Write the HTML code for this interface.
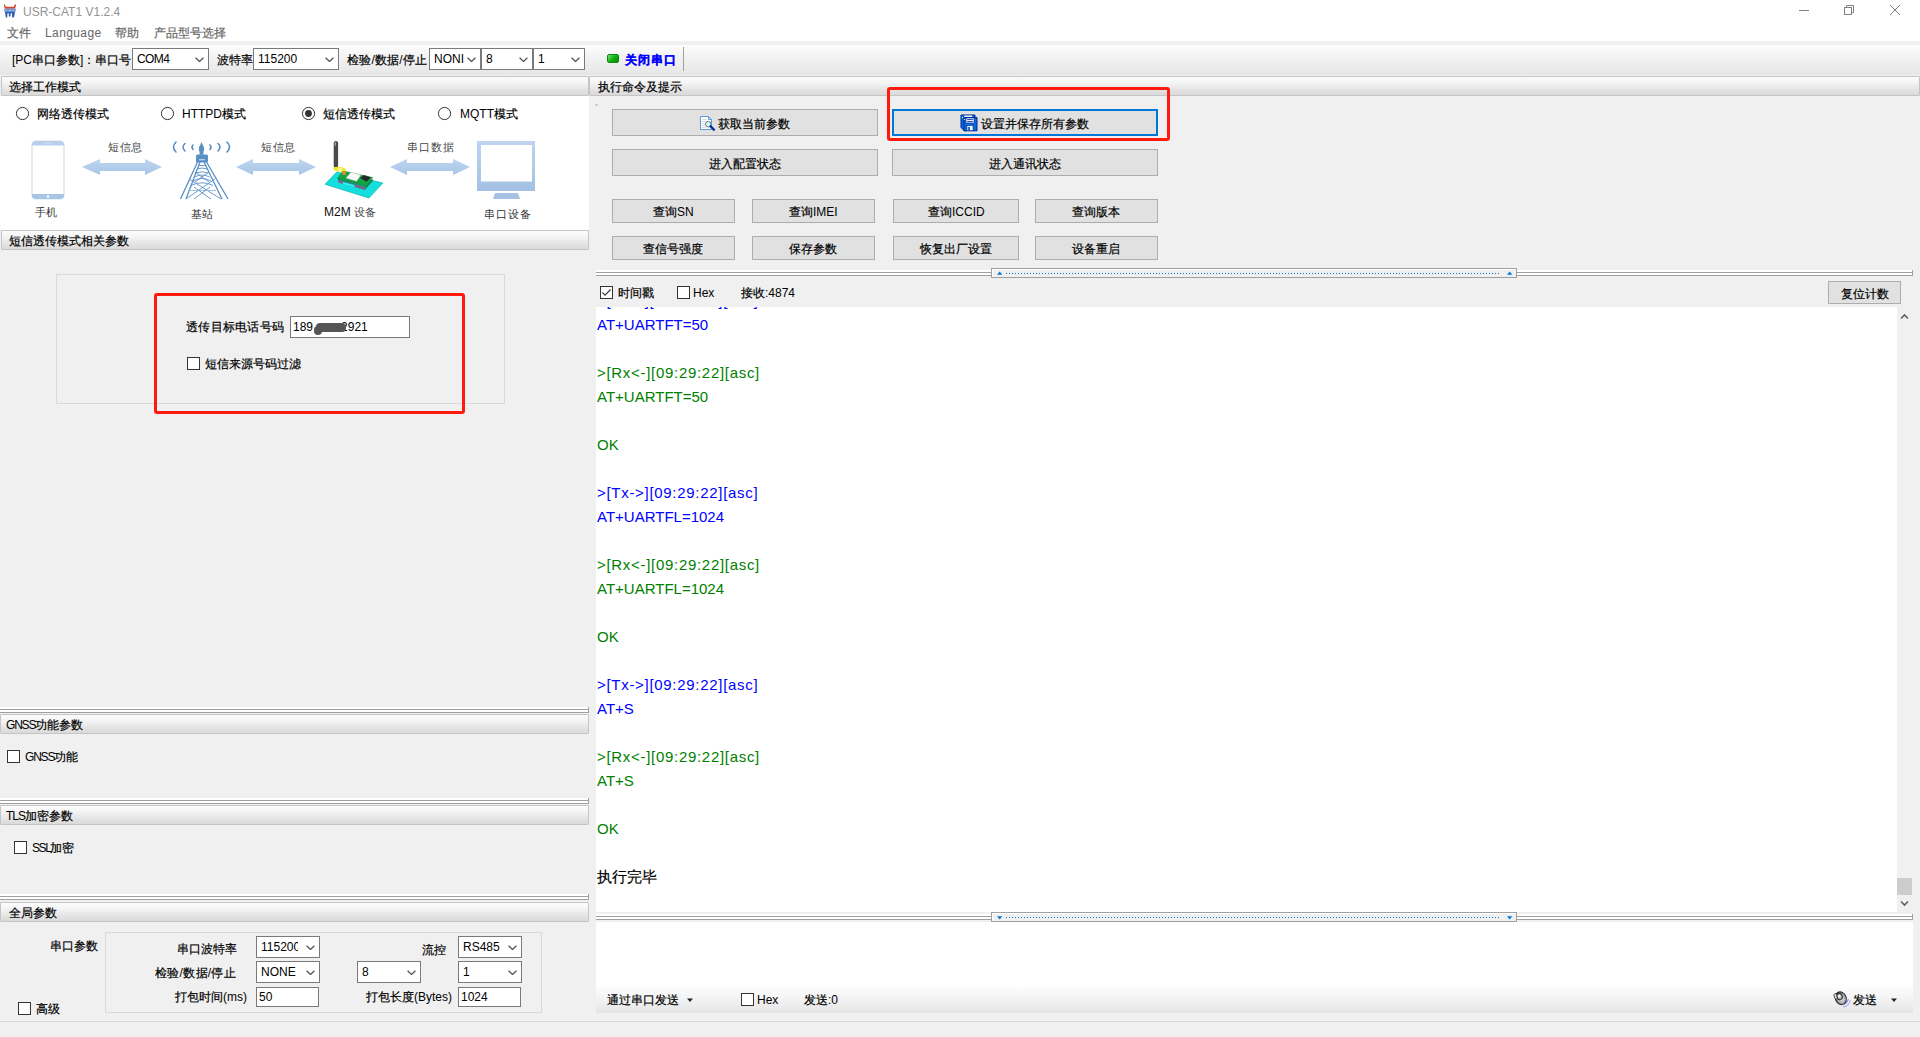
<!DOCTYPE html>
<html><head><meta charset="utf-8">
<style>
*{box-sizing:border-box}
html,body{margin:0;padding:0}
body{width:1920px;height:1037px;overflow:hidden;position:relative;background:#f0f0f0;font-family:"Liberation Sans",sans-serif;font-size:12px;line-height:14px;color:#000}
.a{position:absolute}
.t{position:absolute;white-space:nowrap}
.hdr{position:absolute;height:20px;border:1px solid #c5c5c5;border-radius:1px;background:linear-gradient(#fcfcfc,#f3f3f3 35%,#e2e2e2 75%,#dadada)}
.hdr>span{position:absolute;left:7px;top:3px;white-space:nowrap}
.btn{position:absolute;border:1px solid #adadad;background:#e1e1e1;text-align:center;white-space:nowrap}
.cb{position:absolute;width:13px;height:13px;border:1px solid #333;background:#fff}
.cmb{position:absolute;border:1px solid #7a7a7a;background:#fff;height:22px}
.cmb>span{position:absolute;left:4px;top:3px;white-space:nowrap}
.cmb svg{position:absolute;right:4px;top:8px}
.inp{position:absolute;border:1px solid #7a7a7a;background:#fff}
.spl{position:absolute;height:6px;background:linear-gradient(#fff 0,#fff 2px,#a0a0a0 2px,#a0a0a0 3px,#fff 3px,#fff 5px,#a0a0a0 5px,#a0a0a0 6px)}
.log{position:absolute;left:1px;font-size:15px;line-height:17px;white-space:nowrap}
.k{-webkit-text-stroke:var(--ks,0.2px) currentColor;display:inline-block;width:var(--kw,1em);text-align:center;font-weight:inherit}
.bl{color:#0000ff}.gr{color:#008000}
</style></head>
<body>
<!-- title bar + menu -->
<div class="a" style="left:0;top:0;width:1920px;height:41px;background:#fff"></div>
<svg class="a" style="left:0;top:0" width="20" height="20" viewBox="0 0 20 20">
<path d="M4 4.5 Q4.5 4 5 4.5 L5.8 6.8 L13.8 6.8 L14.8 4.5 Q15.5 4 16 4.5 L15.8 6.5 L14.8 8.8 L5 8.8 L4.2 6.5 Z" fill="#d6442c"/>
<rect x="4.2" y="8.6" width="11.6" height="3" fill="#6a93d2"/>
<path d="M5 10.3 H7 M8.5 10.3 H11.5 M13 10.3 H15" stroke="#b8cbe8" stroke-width="0.8"/>
<path d="M5 11.5 H15 L14.6 14.5 L13.9 17.5 L12.2 17.5 L12 13.5 Q11.3 12.5 10.7 13.5 L10.4 16.5 L8.9 16.5 L8.7 13.5 Q8 12.5 7.4 13.5 L7.3 17.5 L5.9 17.5 L5.3 14.5 Z" fill="#2a5fb0"/>
</svg>
<div class="t" style="left:23px;top:5px;color:#939393">USR-CAT1 V1.2.4</div>
<div class="t" style="left:7px;top:26px;color:#666"><b class="k">文</b><b class="k">件</b></div>
<div class="t" style="left:45px;top:26px;color:#666;letter-spacing:0.4px">Language</div>
<div class="t" style="left:115px;top:26px;color:#666"><b class="k">帮</b><b class="k">助</b></div>
<div class="t" style="left:154px;top:26px;color:#666"><b class="k">产</b><b class="k">品</b><b class="k">型</b><b class="k">号</b><b class="k">选</b><b class="k">择</b></div>
<svg class="a" style="left:1795px;top:0" width="110" height="22">
<line x1="4" y1="10.5" x2="14" y2="10.5" stroke="#808080" stroke-width="1"/>
<rect x="49.5" y="7.5" width="7" height="7" fill="none" stroke="#808080"/>
<path d="M51.5 7.5 V5.5 H58.5 V12.5 H56.5" fill="none" stroke="#808080"/>
<path d="M95 5 L105 15 M105 5 L95 15" stroke="#808080" stroke-width="1"/>
</svg>

<!-- toolbar -->
<div class="a" style="left:0;top:45px;width:1920px;height:30px;background:linear-gradient(#fdfdfd,#f3f3f3 40%,#e6e6e6)"></div>
<div class="t" style="left:12px;top:53px">[PC<b class="k">串</b><b class="k">口</b><b class="k">参</b><b class="k">数</b>]<b class="k">：</b><b class="k">串</b><b class="k">口</b><b class="k">号</b></div>
<div class="cmb" style="left:132px;top:48px;width:77px"><span style="letter-spacing:-0.6px">COM4</span><svg width="9" height="5"><path d="M0.6 0.8 L4.5 4.5 L8.4 0.8" fill="none" stroke="#505050" stroke-width="1.25"/></svg></div>
<div class="t" style="left:217px;top:53px"><b class="k">波</b><b class="k">特</b><b class="k">率</b></div>
<div class="cmb" style="left:253px;top:48px;width:86px"><span>115200</span><svg width="9" height="5"><path d="M0.6 0.8 L4.5 4.5 L8.4 0.8" fill="none" stroke="#505050" stroke-width="1.25"/></svg></div>
<div class="t" style="left:347px;top:53px;letter-spacing:0.2px;--kw:12.2px"><b class="k">检</b><b class="k">验</b>/<b class="k">数</b><b class="k">据</b>/<b class="k">停</b><b class="k">止</b></div>
<div class="cmb" style="left:429px;top:48px;width:52px"><span>NONI</span><svg width="9" height="5"><path d="M0.6 0.8 L4.5 4.5 L8.4 0.8" fill="none" stroke="#505050" stroke-width="1.25"/></svg></div>
<div class="cmb" style="left:481px;top:48px;width:52px"><span>8</span><svg width="9" height="5"><path d="M0.6 0.8 L4.5 4.5 L8.4 0.8" fill="none" stroke="#505050" stroke-width="1.25"/></svg></div>
<div class="cmb" style="left:533px;top:48px;width:52px"><span>1</span><svg width="9" height="5"><path d="M0.6 0.8 L4.5 4.5 L8.4 0.8" fill="none" stroke="#505050" stroke-width="1.25"/></svg></div>
<div class="a" style="left:607px;top:54px;width:12px;height:9px;border-radius:2px;background:linear-gradient(135deg,#7fe07f,#10b010 50%,#088a08);border:1px solid #0a8a0a"></div>
<div class="t" style="left:625px;top:53px;color:#0000ff;font-weight:bold;letter-spacing:1px;--kw:13px"><b class="k">关</b><b class="k">闭</b><b class="k">串</b><b class="k">口</b></div>
<div class="a" style="left:683px;top:47px;width:1px;height:24px;background:#a0a0a0"></div>

<!-- LEFT PANEL -->
<div class="hdr" style="left:1px;top:76px;width:588px"><span><b class="k">选</b><b class="k">择</b><b class="k">工</b><b class="k">作</b><b class="k">模</b><b class="k">式</b></span></div>
<div class="a" style="left:0;top:96px;width:589px;height:134px;background:#fff"></div>
<!-- radios -->
<svg class="a" style="left:15px;top:106px" width="16" height="16"><circle cx="7.5" cy="7.5" r="6.1" fill="#fff" stroke="#333" stroke-width="1"/></svg>
<div class="t" style="left:37px;top:107px"><b class="k">网</b><b class="k">络</b><b class="k">透</b><b class="k">传</b><b class="k">模</b><b class="k">式</b></div>
<svg class="a" style="left:160px;top:106px" width="16" height="16"><circle cx="7.5" cy="7.5" r="6.1" fill="#fff" stroke="#333" stroke-width="1"/></svg>
<div class="t" style="left:182px;top:107px">HTTPD<b class="k">模</b><b class="k">式</b></div>
<svg class="a" style="left:301px;top:106px" width="16" height="16"><circle cx="7.5" cy="7.5" r="6.1" fill="#fff" stroke="#333" stroke-width="1"/><circle cx="7.5" cy="7.5" r="3.4" fill="#333"/></svg>
<div class="t" style="left:323px;top:107px"><b class="k">短</b><b class="k">信</b><b class="k">透</b><b class="k">传</b><b class="k">模</b><b class="k">式</b></div>
<svg class="a" style="left:437px;top:106px" width="16" height="16"><circle cx="7.5" cy="7.5" r="6.1" fill="#fff" stroke="#333" stroke-width="1"/></svg>
<div class="t" style="left:460px;top:107px">MQTT<b class="k">模</b><b class="k">式</b></div>
<!-- diagram -->
<svg class="a" style="left:0;top:130px" width="589" height="100" viewBox="0 130 589 100">
<defs>
<linearGradient id="ag" x1="0" y1="0" x2="0" y2="1"><stop offset="0" stop-color="#bcd4ee"/><stop offset="1" stop-color="#a9c6e8"/></linearGradient>
<linearGradient id="mg" x1="0" y1="0" x2="0" y2="1"><stop offset="0" stop-color="#bdd5ef"/><stop offset="1" stop-color="#a3c1e3"/></linearGradient>
</defs>
<!-- phone -->
<rect x="32" y="141" width="32" height="58" rx="4" fill="#fff" stroke="#cfe0f4" stroke-width="1.2"/>
<path d="M32 145 Q32 141 36 141 L60 141 Q64 141 64 145 L64 145.5 L32 145.5 Z" fill="#b7cfec"/>
<path d="M32 194 L64 194 L64 195 Q64 199 60 199 L36 199 Q32 199 32 195 Z" fill="#a8c4e6"/>
<circle cx="48" cy="196.5" r="1.3" fill="#fff"/>
<rect x="45" y="142.5" width="6" height="1" fill="#d6e4f5"/>
<!-- arrows -->
<path d="M82 167 L100 159 L100 163 L145 163 L145 159 L162 167 L145 175 L145 171 L100 171 L100 175 Z" fill="url(#ag)"/>
<path d="M236 167 L253 159 L253 163 L299 163 L299 159 L316 167 L299 175 L299 171 L253 171 L253 175 Z" fill="url(#ag)"/>
<path d="M390 167 L407 159 L407 163 L453 163 L453 159 L470 167 L453 175 L453 171 L407 171 L407 175 Z" fill="url(#ag)"/>
<!-- tower -->
<g fill="none" stroke="#5a8fc5" stroke-width="1.6" stroke-linecap="round">
<path d="M176 142 Q171 147 176 152"/><path d="M185 143.5 Q181 147 185 151"/><path d="M193 145 Q191 147 193 149.5"/>
<path d="M210 145 Q212 147 210 149.5"/><path d="M218 143.5 Q222 147 218 151"/><path d="M227 142 Q232 147 227 152"/>
</g>
<g fill="#5a8fc5">
<path d="M201.5 142 L202.8 145 Q205 148 203.6 151.5 L203.3 154.8 L199.7 154.8 L199.4 151.5 Q198 148 200.2 145 Z"/>
<rect x="196" y="154.5" width="12" height="8" rx="1.5"/>
</g>
<rect x="199" y="159" width="6" height="1.3" fill="#b5cfe9"/>
<g stroke="#5a8fc5" stroke-width="1.3" fill="none">
<path d="M197.5 162 L180.5 199"/><path d="M200 162 L186 199"/>
<path d="M206.5 162 L228 199"/><path d="M204 162 L222 199"/>
</g>
<g stroke="#5a8fc5" stroke-width="0.9" fill="none">
<path d="M198 165.5 L206 165.5"/><path d="M197 169 Q202 167 207 169"/><path d="M196 173 Q202 170.5 208 173"/>
<path d="M194.5 177 Q202 173 209.5 177"/><path d="M193 181 Q202 176 211 181"/><path d="M191 185.5 Q202 180 213 185.5"/>
<path d="M195 172 L209 182 M209 172 L195 182"/>
<path d="M186 199 L215 179"/><path d="M221 199 L189 179"/>
<path d="M188 190.5 L216 190.5" stroke="#9dbde0"/>
<path d="M194 199 L210 187"/><path d="M211 199 L194 187"/>
</g>
<!-- M2M device -->
<path d="M325 184.3 L336.8 172 L382.8 183 L368.9 198 Z" fill="#14dede" stroke="#0cb4b4" stroke-width="0.7"/>
<path d="M338 178.5 L365.5 186.5 L365.5 190 L338 182 Z" fill="#3a3a50" opacity="0.55"/>
<path d="M338 180 L343 181.5 L343 184 L338 182.5 Z" fill="#7a6a80"/>
<path d="M354.7 184.5 L365.2 187.5 L365.2 190 L354.7 187 Z" fill="#7a6a80"/>
<path d="M343 182 L354.5 185 L354.5 187 L343 184 Z" fill="#30f0f0"/>
<path d="M365.5 186.5 L372.6 178.5 L372.6 181 L365.5 189 Z" fill="#0c7a30"/>
<path d="M337.4 178.4 L343 171 L372.6 177.5 L365.3 186 Z" fill="#12a442" stroke="#0a7a2a" stroke-width="0.5"/>
<path d="M346 178.1 L351 172.3 L360.9 175 L356.6 181.2 Z" fill="#f8f8f8" stroke="#c8c8c8" stroke-width="0.4"/>
<path d="M360.3 178 L364 175 L370.8 177.5 L366.4 181.8 Z" fill="#282828"/>
<rect x="333.7" y="141" width="4.4" height="27" rx="2.2" fill="#4a4a4a"/>
<rect x="334.5" y="142" width="1.5" height="4" rx="0.7" fill="#9a9a9a"/>
<path d="M333.5 167 L341 167 L345.8 169 L345.8 171.6 L338 171.6 L333.5 170 Z" fill="#f2e428"/>
<ellipse cx="340" cy="169.3" rx="2.3" ry="1.6" fill="#fff8a0"/>
<rect x="342.4" y="171" width="3.4" height="4" fill="#d89028"/>
<!-- monitor -->
<rect x="477" y="141" width="58" height="50" fill="url(#mg)"/>
<rect x="481" y="145" width="51" height="36.5" fill="#fff"/>
<path d="M495 193 L518 193 L520 199 L493 199 Z" fill="#a5c2e4"/>
</svg>
<div class="t" style="left:108px;top:140px;font-size:11px;color:#444;font-family:'Liberation Sans',sans-serif;--ks:0px;letter-spacing:0.5px;--kw:11.5px"><b class="k">短</b><b class="k">信</b><b class="k">息</b></div>
<div class="t" style="left:261px;top:140px;font-size:11px;color:#444;font-family:'Liberation Sans',sans-serif;--ks:0px;letter-spacing:0.5px;--kw:11.5px"><b class="k">短</b><b class="k">信</b><b class="k">息</b></div>
<div class="t" style="left:407px;top:140px;font-size:11px;color:#444;font-family:'Liberation Sans',sans-serif;--ks:0px;letter-spacing:1px;--kw:12px"><b class="k">串</b><b class="k">口</b><b class="k">数</b><b class="k">据</b></div>
<div class="t" style="left:35px;top:205px;font-size:11px;color:#333;font-family:'Liberation Sans',sans-serif;--ks:0px"><b class="k">手</b><b class="k">机</b></div>
<div class="t" style="left:191px;top:207px;font-size:11px;color:#333;font-family:'Liberation Sans',sans-serif;--ks:0px"><b class="k">基</b><b class="k">站</b></div>
<div class="t" style="left:324px;top:205px;font-size:12px;color:#111">M2M <span style="font-family:'Liberation Sans',sans-serif;--ks:0px;font-size:11px;color:#444"><b class="k">设</b><b class="k">备</b></span></div>
<div class="t" style="left:484px;top:207px;font-size:11px;color:#333;font-family:'Liberation Sans',sans-serif;--ks:0px;letter-spacing:1px;--kw:12px"><b class="k">串</b><b class="k">口</b><b class="k">设</b><b class="k">备</b></div>

<div class="hdr" style="left:1px;top:230px;width:588px"><span><b class="k">短</b><b class="k">信</b><b class="k">透</b><b class="k">传</b><b class="k">模</b><b class="k">式</b><b class="k">相</b><b class="k">关</b><b class="k">参</b><b class="k">数</b></span></div>
<!-- group box -->
<div class="a" style="left:56px;top:274px;width:449px;height:130px;border:1px solid #d9d9d9"></div>
<div class="t" style="left:186px;top:320px;letter-spacing:0.3px;--kw:12.3px"><b class="k">透</b><b class="k">传</b><b class="k">目</b><b class="k">标</b><b class="k">电</b><b class="k">话</b><b class="k">号</b><b class="k">码</b></div>
<div class="inp" style="left:290px;top:316px;width:120px;height:22px"></div>
<div class="t" style="left:293px;top:320px">189<span style="display:inline-block;width:28px"></span>2921</div>
<div class="a" style="left:316px;top:323px;width:30px;height:9px;border-radius:4px;background:#555"></div>
<div class="a" style="left:314px;top:326px;width:8px;height:9px;border-radius:4px;background:#555"></div>
<div class="cb" style="left:187px;top:357px"></div>
<div class="t" style="left:205px;top:357px"><b class="k">短</b><b class="k">信</b><b class="k">来</b><b class="k">源</b><b class="k">号</b><b class="k">码</b><b class="k">过</b><b class="k">滤</b></div>
<div class="a" style="left:154px;top:293px;width:311px;height:121px;border:3px solid #ff1a0d;border-radius:3px"></div>

<!-- GNSS -->
<div class="spl" style="left:0;top:707px;width:589px"></div>
<div class="a" style="left:588px;top:707px;width:1px;height:6px;background:#a0a0a0"></div>
<div class="hdr" style="left:0;top:714px;width:589px"><span style="left:5px"><span style="letter-spacing:-1.2px">GNSS</span><b class="k">功</b><b class="k">能</b><b class="k">参</b><b class="k">数</b></span></div>
<div class="cb" style="left:7px;top:750px"></div>
<div class="t" style="left:25px;top:750px"><span style="letter-spacing:-1.2px">GNSS</span><b class="k">功</b><b class="k">能</b></div>
<!-- TLS -->
<div class="spl" style="left:0;top:798px;width:589px"></div>
<div class="a" style="left:588px;top:798px;width:1px;height:6px;background:#a0a0a0"></div>
<div class="hdr" style="left:0;top:805px;width:589px"><span style="left:5px"><span style="letter-spacing:-1px">TLS</span><b class="k">加</b><b class="k">密</b><b class="k">参</b><b class="k">数</b></span></div>
<div class="cb" style="left:14px;top:841px"></div>
<div class="t" style="left:32px;top:841px"><span style="letter-spacing:-1.4px">SSL</span><b class="k">加</b><b class="k">密</b></div>
<!-- Global -->
<div class="spl" style="left:0;top:894px;width:589px"></div>
<div class="a" style="left:588px;top:894px;width:1px;height:6px;background:#a0a0a0"></div>
<div class="hdr" style="left:0;top:902px;width:589px"><span style="left:8px"><b class="k">全</b><b class="k">局</b><b class="k">参</b><b class="k">数</b></span></div>
<div class="t" style="left:50px;top:939px"><b class="k">串</b><b class="k">口</b><b class="k">参</b><b class="k">数</b></div>
<div class="a" style="left:105px;top:932px;width:437px;height:81px;border:1px solid #d9d9d9"></div>
<div class="t" style="left:177px;top:942px"><b class="k">串</b><b class="k">口</b><b class="k">波</b><b class="k">特</b><b class="k">率</b></div>
<div class="cmb" style="left:256px;top:936px;width:64px"><span style="width:37px;overflow:hidden;display:block;height:14px">115200</span><svg width="9" height="5"><path d="M0.6 0.8 L4.5 4.5 L8.4 0.8" fill="none" stroke="#505050" stroke-width="1.25"/></svg></div>
<div class="t" style="left:422px;top:943px"><b class="k">流</b><b class="k">控</b></div>
<div class="cmb" style="left:458px;top:936px;width:64px"><span>RS485</span><svg width="9" height="5"><path d="M0.6 0.8 L4.5 4.5 L8.4 0.8" fill="none" stroke="#505050" stroke-width="1.25"/></svg></div>
<div class="t" style="left:155px;top:966px;letter-spacing:0.3px;--kw:12.3px"><b class="k">检</b><b class="k">验</b>/<b class="k">数</b><b class="k">据</b>/<b class="k">停</b><b class="k">止</b></div>
<div class="cmb" style="left:256px;top:961px;width:64px"><span>NONE</span><svg width="9" height="5"><path d="M0.6 0.8 L4.5 4.5 L8.4 0.8" fill="none" stroke="#505050" stroke-width="1.25"/></svg></div>
<div class="cmb" style="left:357px;top:961px;width:64px"><span>8</span><svg width="9" height="5"><path d="M0.6 0.8 L4.5 4.5 L8.4 0.8" fill="none" stroke="#505050" stroke-width="1.25"/></svg></div>
<div class="cmb" style="left:458px;top:961px;width:64px"><span>1</span><svg width="9" height="5"><path d="M0.6 0.8 L4.5 4.5 L8.4 0.8" fill="none" stroke="#505050" stroke-width="1.25"/></svg></div>
<div class="t" style="left:175px;top:990px"><b class="k">打</b><b class="k">包</b><b class="k">时</b><b class="k">间</b>(ms)</div>
<div class="inp" style="left:256px;top:987px;width:63px;height:20px"><span class="t" style="left:2px;top:2px">50</span></div>
<div class="t" style="left:366px;top:990px"><b class="k">打</b><b class="k">包</b><b class="k">长</b><b class="k">度</b>(Bytes)</div>
<div class="inp" style="left:458px;top:987px;width:63px;height:20px"><span class="t" style="left:2px;top:2px">1024</span></div>
<div class="cb" style="left:18px;top:1002px"></div>
<div class="t" style="left:36px;top:1002px"><b class="k">高</b><b class="k">级</b></div>
<!-- status line -->
<div class="a" style="left:0;top:1021px;width:1920px;height:1px;background:#d8d8d8"></div>

<!-- RIGHT PANEL -->
<div class="hdr" style="left:589px;top:76px;width:1331px"><span style="left:8px"><b class="k">执</b><b class="k">行</b><b class="k">命</b><b class="k">令</b><b class="k">及</b><b class="k">提</b><b class="k">示</b></span></div>
<div class="a" style="left:595px;top:104px;width:3px;height:2px;background:#c8c8c8;border-radius:1px"></div>
<!-- buttons -->
<div class="btn" style="left:612px;top:109px;width:266px;height:27px"></div>
<svg class="a" style="left:696px;top:112px" width="24" height="22" viewBox="696 112 24 22">
<path d="M700.5 116.5 H708.5 L711.5 119.5 V129.5 H700.5 Z" fill="#fff" stroke="#5b9ad6" stroke-width="1"/>
<path d="M708.5 116.5 V119.5 H711.5" fill="none" stroke="#5b9ad6" stroke-width="1"/>
<path d="M702 119.5 H706.5 M702 121.5 H706 M702 123.5 H705 M702 125.5 H705 M702 127.5 H706" stroke="#d4d4d4" stroke-width="0.8"/>
<circle cx="708.3" cy="124.2" r="2.8" fill="#cffafa" stroke="#787878" stroke-width="1"/>
<path d="M710.6 126.4 L713.8 129.6" stroke="#0a2aa0" stroke-width="2.2" stroke-linecap="square"/>
</svg>
<div class="t" style="left:718px;top:117px"><b class="k">获</b><b class="k">取</b><b class="k">当</b><b class="k">前</b><b class="k">参</b><b class="k">数</b></div>
<div class="btn" style="left:892px;top:109px;width:266px;height:27px;border:2px solid #0078d7"></div>
<svg class="a" style="left:956px;top:112px" width="24" height="22" viewBox="956 112 24 22">
<path d="M961 115 H975 V128 L964.5 131 L961 127.5 Z" fill="#0068d8" stroke="#002898" stroke-width="1"/>
<rect x="964.2" y="115.6" width="8" height="1.4" rx="0.6" fill="#fff"/>
<circle cx="962.5" cy="117.5" r="0.7" fill="#fff"/>
<path d="M964 117.5 H977 V130.8 H964 Z" fill="#0a6ad8" stroke="#002898" stroke-width="1"/>
<rect x="966" y="118" width="8" height="5" fill="#fff" stroke="#002898" stroke-width="0.6"/>
<path d="M967.2 119.6 H972.8 M967.2 121.6 H972.8" stroke="#002898" stroke-width="0.9"/>
<rect x="967" y="125.5" width="6" height="5" fill="#fff" stroke="#002898" stroke-width="0.6"/>
<rect x="968.2" y="127" width="1.8" height="3.5" fill="#0a5ac8"/>
<circle cx="964.5" cy="119.5" r="0.6" fill="#fff"/>
</svg>
<div class="t" style="left:981px;top:117px"><b class="k">设</b><b class="k">置</b><b class="k">并</b><b class="k">保</b><b class="k">存</b><b class="k">所</b><b class="k">有</b><b class="k">参</b><b class="k">数</b></div>
<div class="btn" style="left:612px;top:149px;width:266px;height:27px"></div>
<div class="t" style="left:709px;top:157px"><b class="k">进</b><b class="k">入</b><b class="k">配</b><b class="k">置</b><b class="k">状</b><b class="k">态</b></div>
<div class="btn" style="left:892px;top:149px;width:266px;height:27px"></div>
<div class="t" style="left:989px;top:157px"><b class="k">进</b><b class="k">入</b><b class="k">通</b><b class="k">讯</b><b class="k">状</b><b class="k">态</b></div>

<div class="btn" style="left:612px;top:199px;width:123px;height:24px"></div><div class="t" style="left:653px;top:205px"><b class="k">查</b><b class="k">询</b>SN</div>
<div class="btn" style="left:752px;top:199px;width:123px;height:24px"></div><div class="t" style="left:789px;top:205px"><b class="k">查</b><b class="k">询</b>IMEI</div>
<div class="btn" style="left:893px;top:199px;width:126px;height:24px"></div><div class="t" style="left:928px;top:205px"><b class="k">查</b><b class="k">询</b>ICCID</div>
<div class="btn" style="left:1035px;top:199px;width:123px;height:24px"></div><div class="t" style="left:1072px;top:205px"><b class="k">查</b><b class="k">询</b><b class="k">版</b><b class="k">本</b></div>
<div class="btn" style="left:612px;top:236px;width:123px;height:24px"></div><div class="t" style="left:643px;top:242px"><b class="k">查</b><b class="k">信</b><b class="k">号</b><b class="k">强</b><b class="k">度</b></div>
<div class="btn" style="left:752px;top:236px;width:123px;height:24px"></div><div class="t" style="left:789px;top:242px"><b class="k">保</b><b class="k">存</b><b class="k">参</b><b class="k">数</b></div>
<div class="btn" style="left:893px;top:236px;width:126px;height:24px"></div><div class="t" style="left:920px;top:242px"><b class="k">恢</b><b class="k">复</b><b class="k">出</b><b class="k">厂</b><b class="k">设</b><b class="k">置</b></div>
<div class="btn" style="left:1035px;top:236px;width:123px;height:24px"></div><div class="t" style="left:1072px;top:242px"><b class="k">设</b><b class="k">备</b><b class="k">重</b><b class="k">启</b></div>
<div class="a" style="left:887px;top:87px;width:283px;height:54px;border:3px solid #ff1a0d;border-radius:3px"></div>

<!-- splitter top -->
<div class="spl" style="left:596px;top:270px;width:1317px"></div>
<div class="a" style="left:1912px;top:270px;width:1px;height:6px;background:#a0a0a0"></div>
<div class="a" style="left:991px;top:268px;width:526px;height:10px;border:1px solid #a0a0a0;background:#f0f0f0;box-shadow:inset 1px 1px 0 #fff"></div>
<svg class="a" style="left:997px;top:271px" width="6" height="4"><path d="M0 3.8 L2.7 0.6 L5.4 3.8 Z" fill="#0078d7"/></svg>
<div class="a" style="left:1006px;top:273px;width:494px;height:1px;background:repeating-linear-gradient(90deg,#0078d7 0,#0078d7 1px,transparent 1px,transparent 3px)"></div>
<svg class="a" style="left:1507px;top:271px" width="6" height="4"><path d="M0 3.8 L2.7 0.6 L5.4 3.8 Z" fill="#0078d7"/></svg>

<!-- receive toolbar -->
<div class="cb" style="left:600px;top:286px"></div>
<svg class="a" style="left:600px;top:286px" width="13" height="13"><path d="M2.3 6.3 L5 9.2 L10.6 3.5" fill="none" stroke="#333" stroke-width="1.1"/></svg>
<div class="t" style="left:618px;top:286px"><b class="k">时</b><b class="k">间</b><b class="k">戳</b></div>
<div class="cb" style="left:677px;top:286px"></div>
<div class="t" style="left:693px;top:286px">Hex</div>
<div class="t" style="left:741px;top:286px"><b class="k">接</b><b class="k">收</b>:4874</div>
<div class="btn" style="left:1828px;top:281px;width:73px;height:23px"></div>
<div class="t" style="left:1841px;top:287px"><b class="k">复</b><b class="k">位</b><b class="k">计</b><b class="k">数</b></div>

<!-- log area -->
<div class="a" style="left:596px;top:307px;width:1301px;height:605px;background:#fff;overflow:hidden">
<div class="log bl" style="top:-15px;letter-spacing:0.7px">&gt;[Tx-&gt;][09:29:22][asc]</div>
<div class="log bl" style="top:9px">AT+UARTFT=50</div>
<div class="log gr" style="top:57px;letter-spacing:0.7px">&gt;[Rx&lt;-][09:29:22][asc]</div>
<div class="log gr" style="top:81px">AT+UARTFT=50</div>
<div class="log gr" style="top:129px">OK</div>
<div class="log bl" style="top:177px;letter-spacing:0.7px">&gt;[Tx-&gt;][09:29:22][asc]</div>
<div class="log bl" style="top:201px">AT+UARTFL=1024</div>
<div class="log gr" style="top:249px;letter-spacing:0.7px">&gt;[Rx&lt;-][09:29:22][asc]</div>
<div class="log gr" style="top:273px">AT+UARTFL=1024</div>
<div class="log gr" style="top:321px">OK</div>
<div class="log bl" style="top:369px;letter-spacing:0.7px">&gt;[Tx-&gt;][09:29:22][asc]</div>
<div class="log bl" style="top:393px">AT+S</div>
<div class="log gr" style="top:441px;letter-spacing:0.7px">&gt;[Rx&lt;-][09:29:22][asc]</div>
<div class="log gr" style="top:465px">AT+S</div>
<div class="log gr" style="top:513px">OK</div>
<div class="log" style="top:561px"><b class="k">执</b><b class="k">行</b><b class="k">完</b><b class="k">毕</b></div>
</div>
<!-- cover toolbar overlap -->
<!-- scrollbar -->
<svg class="a" style="left:1900px;top:312px" width="9" height="8"><path d="M1 6.5 L4.5 3 L8 6.5" fill="none" stroke="#606060" stroke-width="1.6"/></svg>
<div class="a" style="left:1897px;top:878px;width:15px;height:17px;background:#cdcdcd"></div>
<svg class="a" style="left:1900px;top:900px" width="9" height="8"><path d="M1 1.5 L4.5 5 L8 1.5" fill="none" stroke="#606060" stroke-width="1.6"/></svg>

<!-- splitter bottom -->
<div class="spl" style="left:596px;top:914px;width:1317px"></div>
<div class="a" style="left:1912px;top:914px;width:1px;height:6px;background:#a0a0a0"></div>
<div class="a" style="left:991px;top:912px;width:526px;height:10px;border:1px solid #a0a0a0;background:#f0f0f0;box-shadow:inset 1px 1px 0 #fff"></div>
<svg class="a" style="left:997px;top:916px" width="6" height="4"><path d="M0 0.2 L2.7 3.4 L5.4 0.2 Z" fill="#0078d7"/></svg>
<div class="a" style="left:1006px;top:917px;width:494px;height:1px;background:repeating-linear-gradient(90deg,#0078d7 0,#0078d7 1px,transparent 1px,transparent 3px)"></div>
<svg class="a" style="left:1507px;top:916px" width="6" height="4"><path d="M0 0.2 L2.7 3.4 L5.4 0.2 Z" fill="#0078d7"/></svg>

<!-- send area -->
<div class="a" style="left:596px;top:922px;width:1317px;height:91px;background:linear-gradient(#fff 0,#fff 62px,#f4f4f4 76px,#e4e4e4 91px)"></div>
<div class="t" style="left:607px;top:993px"><b class="k">通</b><b class="k">过</b><b class="k">串</b><b class="k">口</b><b class="k">发</b><b class="k">送</b></div>
<svg class="a" style="left:687px;top:998px" width="7" height="5"><path d="M0 0.5 H6 L3 4 Z" fill="#222"/></svg>
<div class="cb" style="left:741px;top:993px"></div>
<div class="t" style="left:757px;top:993px">Hex</div>
<div class="t" style="left:804px;top:993px"><b class="k">发</b><b class="k">送</b>:0</div>
<svg class="a" style="left:1830px;top:988px" width="24" height="22" viewBox="1830 988 24 22">
<defs><radialGradient id="spk" cx="0.55" cy="0.6" r="0.6"><stop offset="0" stop-color="#e0e0e0"/><stop offset="0.6" stop-color="#a8a8a8"/><stop offset="1" stop-color="#404040"/></radialGradient></defs>
<ellipse cx="1840.8" cy="998.2" rx="5.4" ry="6.5" transform="rotate(-25 1840.8 998.2)" fill="url(#spk)" stroke="#2a2a2a" stroke-width="1"/>
<ellipse cx="1835.9" cy="996.4" rx="1.7" ry="3" transform="rotate(-20 1835.9 996.4)" fill="#e6e6e6" stroke="#333" stroke-width="0.8"/>
<ellipse cx="1839.6" cy="996.6" rx="2.6" ry="3.1" transform="rotate(-25 1839.6 996.6)" fill="#bdbdbd" stroke="#2a2a2a" stroke-width="1"/>
<circle cx="1839.3" cy="996" r="1.2" fill="#fff"/>
<path d="M1843.5 1005 Q1847.8 1003.8 1848.3 999" fill="none" stroke="#8080f0" stroke-width="0.9"/>
<path d="M1843 1007 Q1849.8 1006 1850 1000" fill="none" stroke="#9a9af8" stroke-width="0.9"/>
</svg>
<div class="t" style="left:1853px;top:993px"><b class="k">发</b><b class="k">送</b></div>
<svg class="a" style="left:1891px;top:998px" width="7" height="5"><path d="M0 0.5 H6 L3 4 Z" fill="#222"/></svg>

</body></html>
